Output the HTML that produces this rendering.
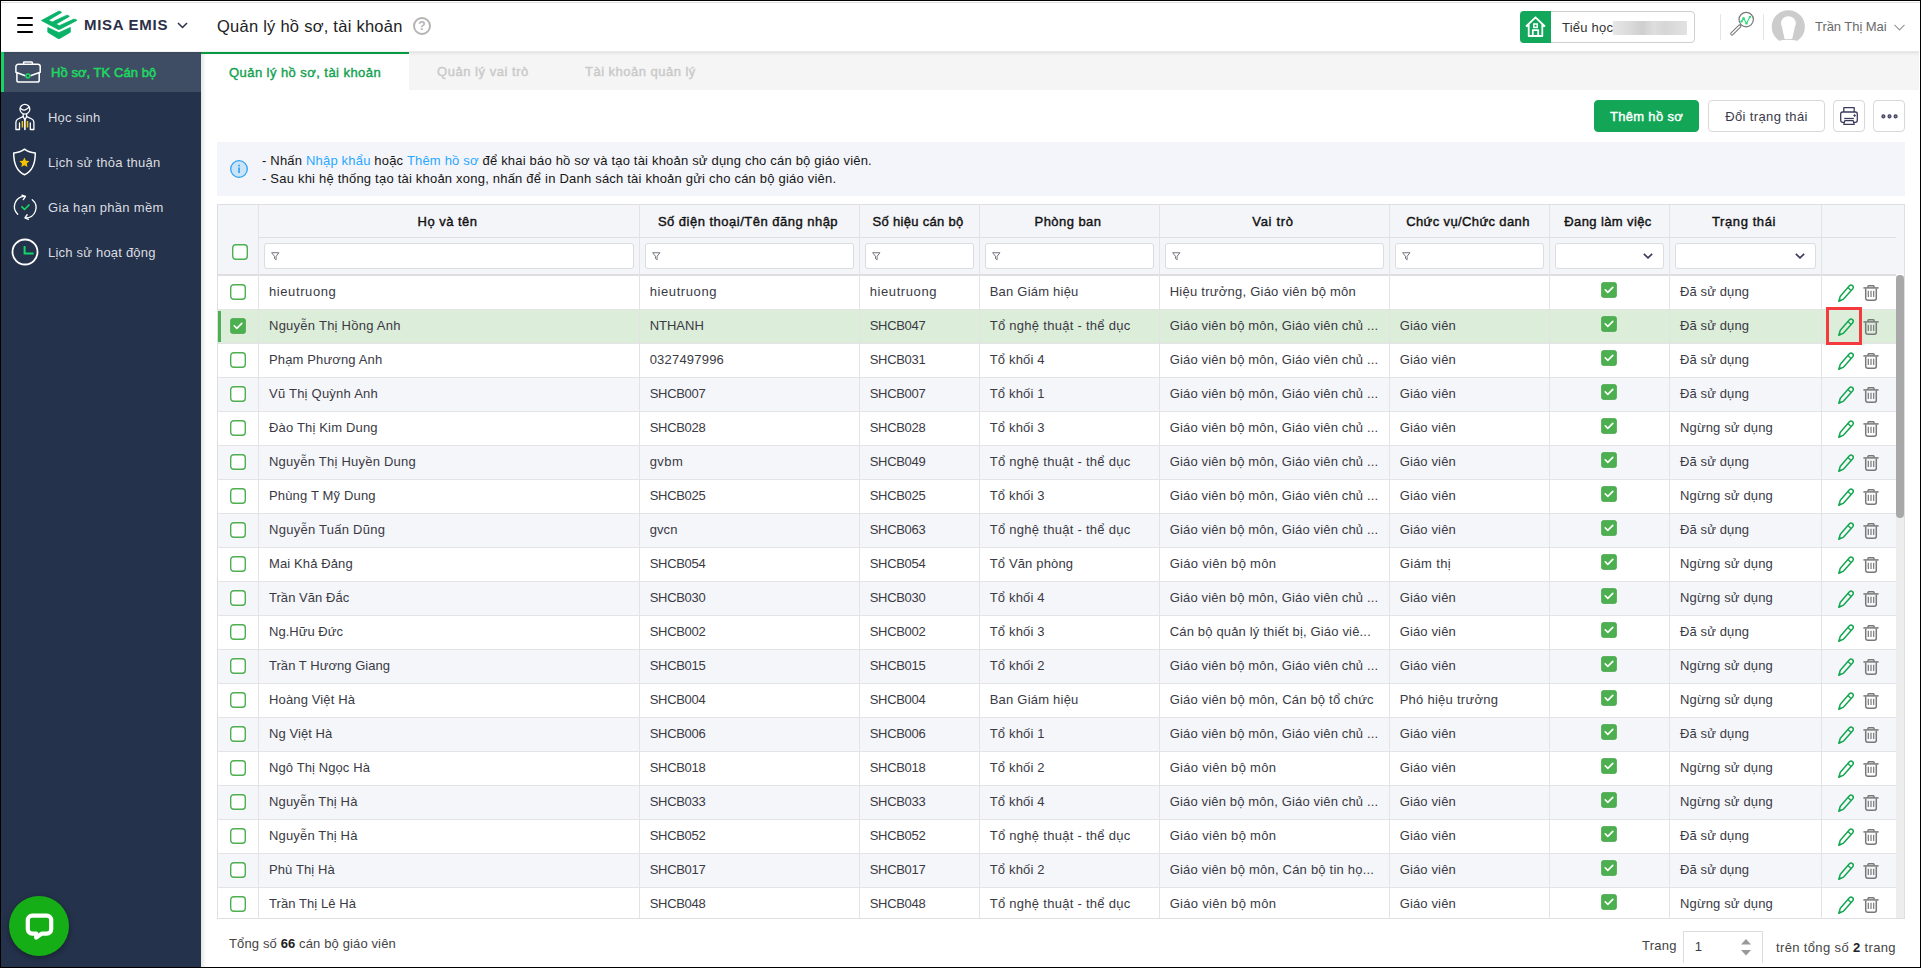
<!DOCTYPE html>
<html lang="vi"><head><meta charset="utf-8"><title>Quản lý hồ sơ, tài khoản</title>
<style>
*{box-sizing:border-box;margin:0;padding:0}
html,body{width:1921px;height:968px;overflow:hidden;background:#fff}
body{position:relative;font-family:"Liberation Sans",sans-serif;font-size:13px;color:#3a3a44}
.abs,.frame,.hdr,.side,.tabs,.main,.rows,.row,.foot{position:absolute}
svg{position:absolute;overflow:visible}
.frame{left:0;top:0;width:1921px;height:968px;border:1px solid #000;z-index:50;pointer-events:none}
/* header */
.hdr{left:1px;top:1px;width:1919px;height:50px;background:#fff;z-index:5}
.hshadow{position:absolute;left:1px;top:51px;width:1918px;height:5px;z-index:5;background:linear-gradient(rgba(0,0,0,.035),rgba(0,0,0,.075) 22%,rgba(0,0,0,.035) 50%,rgba(0,0,0,0))}
.hdr .topline{position:absolute;left:0;top:1px;width:100%;height:1px;background:#dfe0e3}
.hdr .burger{position:absolute;left:16px;top:16px;width:16px;height:16px}
.hdr .burger i{position:absolute;left:0;width:16px;height:2px;background:#000;border-radius:1px}
.hdr .brand{position:absolute;left:83px;top:15px;font-weight:700;font-size:15px;line-height:18px;color:#2b3047;white-space:nowrap}
.hdr .title{position:absolute;left:216px;top:13px;font-size:16.5px;line-height:24px;color:#222;white-space:nowrap}
.hdr .help{position:absolute;left:412px;top:16px;width:18px;height:18px;border:2px solid #b4b4b4;border-radius:50%;color:#b4b4b4;font-size:12px;font-weight:700;line-height:14px;text-align:center}
.school{position:absolute;left:1519px;top:10px;width:175px;height:32px;border:1px solid #cfcfcf;border-radius:4px;background:#fff}
.school .hm{position:absolute;left:-1px;top:-1px;width:31px;height:32px;background:#12a75a;border-radius:4px 0 0 4px}
.school .nm{position:absolute;left:41px;top:7px;font-size:13px;line-height:18px;color:#333;white-space:nowrap}
.school .blur{position:absolute;left:92px;top:9px;width:74px;height:14px;background:linear-gradient(90deg,#e6e6e6,#dcdcdc 20%,#cfcfcf 40%,#dedede 55%,#d6d6d6 70%,#e2e2e2);filter:blur(.6px)}
.hdr .vd{position:absolute;top:13px;width:1px;height:26px;background:#e4e4ec}
.hdr .user{position:absolute;left:1814px;top:17px;font-size:13px;line-height:18px;color:#6a6a6a;white-space:nowrap}
/* sidebar */
.side{left:1px;top:52px;width:200px;height:915px;background:#24324b;z-index:4}
.side .it{position:absolute;left:0;width:200px;height:40px;color:#dcdde0;white-space:nowrap}
.side .it span{position:absolute;left:47px;top:12px;line-height:18px;font-size:13px}
.side .it.act{background:#3f4d64;color:#1ed760;-webkit-text-stroke:.55px #1ed760}
.side .it.act:before{content:"";position:absolute;left:0;top:0;width:3px;height:40px;background:#12d665}
.side .it.act span{left:50px}
.chat{position:absolute;left:8px;top:844px;width:60px;height:60px;border-radius:50%;background:#16ae16;box-shadow:0 2px 6px rgba(0,0,0,.35)}
/* tabs */
.tabs{left:201px;top:51px;width:1718px;height:39px;background:#f5f5f5}
.tabs .t1{position:absolute;left:0;top:0;width:208px;height:39px;background:#fff}
.tabs .t1:before{content:"";position:absolute;left:0;top:1px;width:208px;height:2px;background:#079a43}
.tabline{position:absolute;left:201px;top:52px;width:208px;height:2px;background:#079a43;z-index:6}
.tabs b{position:absolute;top:12px;line-height:18px;font-size:13px;font-weight:400;white-space:nowrap;-webkit-text-stroke:.4px currentColor}
.tabs .t1 b{left:28px;top:13px;color:#12a150}
.tabs .t2{left:236px;color:#c9c9c9}
.tabs .t3{left:384px;color:#c9c9c9}
/* main */
.main{left:201px;top:90px;width:1719px;height:877px;background:#fff}
.sideshadow{position:absolute;left:201px;top:52px;width:5px;height:915px;background:linear-gradient(90deg,rgba(0,0,0,.10),rgba(0,0,0,0));z-index:3}
.btn{position:absolute;top:100px;height:32px;border-radius:4px;border:1px solid #d8d8dc;background:#fff;font-size:13px;line-height:32px;text-align:center;white-space:nowrap;color:#3a3a4a}
.btn.g{background:#12a656;border-color:#12a656;color:#fff;-webkit-text-stroke:.4px #fff}
.info{position:absolute;left:217px;top:142px;width:1688px;height:54px;background:#f4f5fa}
.info p{position:absolute;left:45px;font-size:13px;line-height:18px;color:#161616;white-space:nowrap}
.info a{color:#2aa7ff;text-decoration:none}
/* grid */
.grid{position:absolute;left:217px;top:204px;width:1688px;height:715px;border:1px solid #dfdfe3;background:#fff}
.ghead{position:absolute;left:218px;top:205px;width:1686px;height:69px;background:#f4f5f9}
.hline{position:absolute;left:258px;top:237px;width:1638px;height:1px;background:#e0e0e4}
.hbot{position:absolute;left:218px;top:274px;width:1678px;height:2px;background:#dedee2;z-index:2}
.vl{position:absolute;top:205px;width:1px;height:713px;background:#e3e3e6;z-index:2}
.th{position:absolute;margin-left:-1.5px;top:205px;height:32px;line-height:34px;text-align:center;color:#111;font-size:13px;white-space:nowrap;-webkit-text-stroke:.4px #111}
.fi{position:absolute;top:243px;height:26px;border:1px solid #dcdce0;border-radius:3px;background:#fff}
.rows{left:218px;top:276px;width:1678px;height:642px;overflow:hidden}
.row{left:0;width:1678px;height:34px;border-bottom:1px solid #e4e4e7;background:#fff}
.row.alt{background:#f5f6fa}
.row.sel{background:#dcedda}
.row.sel:before{content:"";position:absolute;left:0;top:1px;width:3px;height:31px;background:#4caf50}
.row .t{position:absolute;top:7px;line-height:18px;white-space:nowrap}
.c1{left:51px}.c2{left:431.7px}.c3{left:651.7px}.c4{left:771.7px}.c5{left:951.7px}.c6{left:1181.7px}.c8{left:1462px}
svg.ck{left:1383px;top:6px}
svg.cbo{left:12px;top:8px}
svg.pen{left:1620px;top:8px}
svg.trash{left:1645px;top:9px}
.hl{position:absolute;left:1826px;top:307px;width:36px;height:38px;border:3px solid #f43a3e;z-index:6}
.sb{position:absolute;left:1896px;top:275px;width:8px;height:643px;background:#ededed;z-index:3}
.sb i{position:absolute;left:0;top:0;width:8px;height:243px;background:#a8a8a8;border-radius:4px}
/* footer */
.foot{left:201px;top:919px;width:1719px;height:48px;background:#fff}
.foot .l{position:absolute;left:28px;top:16px;line-height:18px;white-space:nowrap;color:#444}
.foot b{color:#222}
.foot .pg{position:absolute;left:1441px;top:18px;line-height:18px;color:#444}
.foot .pin{position:absolute;left:1482px;top:12px;width:80px;height:32px;border:1px solid #dcdce0;border-bottom:none;background:#fff}
.foot .pin span{position:absolute;left:10.7px;top:6px;line-height:18px}
.foot .r{position:absolute;left:1575px;top:20px;line-height:18px;white-space:nowrap;color:#444}
</style></head>
<body>
<svg width="0" height="0" style="position:absolute"><defs>
<symbol id="i-pen" viewBox="0 0 16 18"><path d="M2.3 12.2L11.45 1.75A2.2 2.2 0 0 1 14.75 4.65L5.6 15.1 0.8 17.3z" fill="none" stroke="#14a651" stroke-width="1.5" stroke-linejoin="round"/><path d="M9.9 3.6l3.2 2.9" stroke="#14a651" stroke-width="1.3" fill="none"/><path d="M0.8 17.3l.7-2.6 1.9 1.6z" fill="#14a651"/></symbol>
<symbol id="i-trash" viewBox="0 0 16 16"><path d="M0.4 2.9h15.2" stroke="#787878" stroke-width="1.5" fill="none"/><path d="M4.6 2.5l.7-1.7h5.4l.7 1.7" stroke="#787878" stroke-width="1.4" fill="none" stroke-linejoin="round"/><path d="M2.7 3.5v9.7a2 2 0 0 0 2 2h6.6a2 2 0 0 0 2-2V3.5" fill="none" stroke="#787878" stroke-width="1.5"/><path d="M5.3 5.8v6.2M8 5.8v6.2M10.7 5.8v6.2" stroke="#787878" stroke-width="1.2" fill="none"/></symbol>
<symbol id="i-filter" viewBox="0 0 10 10"><path d="M0.7 0.8h8.1L5.7 4.8v3.8L3.9 7.3V4.8z" fill="none" stroke="#74747f" stroke-width="1.1" stroke-linejoin="round"/></symbol>
<symbol id="i-caret" viewBox="0 0 10 6"><path d="M0.8 0.8l4.2 4 4.2-4" fill="none" stroke="#3a3a5a" stroke-width="1.6"/></symbol>
<symbol id="i-ck" viewBox="0 0 16 16"><rect x=".3" y=".3" width="15.4" height="15.4" rx="3" fill="#4caf50" stroke="#43a548" stroke-width=".6"/><path d="M4.2 7.8l2.6 2.6 5-5" fill="none" stroke="#fff" stroke-width="1.6" stroke-linecap="round" stroke-linejoin="round"/></symbol>
<symbol id="i-cb" viewBox="0 0 16 16"><rect x=".7" y=".7" width="14.6" height="14.6" rx="3" fill="#fff" stroke="#4caf50" stroke-width="1.4"/></symbol>
</defs></svg>
<div class="frame"></div>
<div class="hshadow"></div>
<div class="tabline"></div>
<div class="hdr">
<div class="topline"></div>
<div class="burger"><i style="top:0"></i><i style="top:7px"></i><i style="top:14px"></i></div>
<svg style="left:39px;top:9px" width="38" height="30" viewBox="0 0 38 30"><g fill="#08b267" stroke="#08b267" stroke-width=".8" stroke-linejoin="round"><path d="M1.4 10.5L18.6 1.3Q20.6.7 21.6 2.4L8.4 10.3 12.2 12 26.4 5.4Q28.4 4.9 29.3 6.4L16.2 14 19.2 15.8 33.4 9.3Q35.8 8.8 36.9 10.4L19.8 19.3Q18.9 19.7 18 19.3z"/><path d="M7.8 17.5L18 22.3Q18.9 22.7 19.8 22.3L30.3 17.5V22.2L19.8 28.4Q18.9 28.9 18 28.4L7.8 22.2z"/></g></svg>
<div class="brand" style="letter-spacing:.7px">MISA EMIS</div>
<svg style="left:176px;top:21px" width="11" height="7" viewBox="0 0 11 7"><path d="M1 1l4.5 4.5L10 1" fill="none" stroke="#2b3047" stroke-width="1.5"/></svg>
<div class="title" style="letter-spacing:0.25px">Quản lý hồ sơ, tài khoản</div>
<div class="help">?</div>
<div class="school"><div class="hm"><svg style="left:5px;top:5px" width="21" height="21" viewBox="0 0 21 21"><path d="M1 10.5L10.5 1.3 20 10.5M3.7 8.5V20h13.6V8.5M7.8 20v-5.8h5.4V20" fill="none" stroke="#fff" stroke-width="1.8" stroke-linejoin="round"/><rect x="8.8" y="8" width="3.4" height="3.4" fill="none" stroke="#fff" stroke-width="1.5"/></svg></div><div class="nm" style="letter-spacing:0.22px">Tiểu học</div><div class="blur"></div></div>
<div class="vd" style="left:1719px"></div>
<svg style="left:1729px;top:11px" width="25" height="25" viewBox="0 0 25 25"><path d="M9.6 14.2L2 21.8" stroke="#777" stroke-width="3.6" stroke-linecap="round" fill="none"/><path d="M9.6 14.2L2 21.8" stroke="#fff" stroke-width="1.6" stroke-linecap="round" fill="none"/><path d="M11.3 12.5l-1.5 1.5" stroke="#777" stroke-width="1.2" fill="none"/><circle cx="16.2" cy="7.6" r="7.2" fill="#fff" stroke="#777" stroke-width="1.2"/><path d="M11.5 9.4l2.1-3.2 2.9 5.2 3.4-6.5" fill="none" stroke="#2bdc78" stroke-width="1.1" stroke-linejoin="round"/><g fill="#2bdc78"><circle cx="11.5" cy="9.4" r="1.2"/><circle cx="13.6" cy="6.2" r="1.2"/><circle cx="16.5" cy="11.4" r="1.2"/><circle cx="19.9" cy="4.9" r="1.2"/></g></svg>
<div class="vd" style="left:1762px"></div>
<svg style="left:1770px;top:9px;overflow:hidden" width="34" height="34" viewBox="0 0 34 34"><circle cx="17.3" cy="16.8" r="16.6" fill="#cccccc"/><circle cx="17.4" cy="13.6" r="7.4" fill="#fff"/><path d="M11 17.5L13.6 29h7.6L23.8 17.5z" fill="#fff"/><ellipse cx="17.4" cy="36.2" rx="16.5" ry="6.4" fill="#fff"/></svg>
<div class="user" style="letter-spacing:-0.05px">Trần Thị Mai</div>
<svg style="left:1893.3px;top:22.5px" width="11" height="7" viewBox="0 0 11 7"><path d="M0.5 0.8l5 5 5-5" fill="none" stroke="#999" stroke-width="1.2"/></svg>
</div>
<div class="side">
<div class="it act" style="top:0"><svg style="left:14px;top:9px" width="26" height="22" viewBox="0 0 26 22"><g fill="none" stroke="#fff" stroke-width="1.5" stroke-linejoin="round"><path d="M8.6 3.3V1.7a.8.8 0 0 1 .8-.8h7.2a.8.8 0 0 1 .8.8v1.6"/><path d="M3.2 3.3h19.7a2.3 2.3 0 0 1 2.3 2.3v5.6L15.4 14.7M10.3 14.7L.9 11.2V5.6a2.3 2.3 0 0 1 2.3-2.3"/><path d="M1.9 11.8v7.4a1.9 1.9 0 0 0 1.9 1.9h18.5a1.9 1.9 0 0 0 1.9-1.9v-7.4"/></g><circle cx="12.85" cy="14.9" r="1.9" fill="none" stroke="#1ed760" stroke-width="1.6"/></svg><span style="letter-spacing:0.05px">Hồ sơ, TK Cán bộ</span></div>
<div class="it" style="top:45px"><svg style="left:14px;top:6px" width="20" height="27" viewBox="0 0 20 27"><g fill="none" stroke="#fff" stroke-width="1.3" stroke-linejoin="round" stroke-linecap="round"><circle cx="9.9" cy="6.2" r="4.9"/><path d="M5.5 5.4q2.3 2.3 4.6 1.4t3.9-2.6"/><path d="M8.2 11.2v2.4L9.9 17l1.7-3.4v-2.4"/><path d="M8 13.6L3 16q-2 1-2.1 3.2v7.3h3.6v-6.5"/><path d="M11.8 13.6l5 2.4q2 1 2.1 3.2v7.3h-3.6v-6.5"/><path d="M9.9 17v9.5" stroke-width="1.6"/></g><path d="M7.4 18v6.5M12.5 18v6.5" stroke="#f2c200" stroke-width="1.5" fill="none"/></svg><span style="letter-spacing:0.23px">Học sinh</span></div>
<div class="it" style="top:90px"><svg style="left:11.2px;top:6px" width="25" height="28" viewBox="0 0 25 28"><path d="M12.5 1.2c2.8 2.3 6.5 3.6 10.8 3.8 0 9.5-2.3 18-10.8 21.8C4 23 1.7 14.5 1.7 5c4.3-.2 8-1.5 10.8-3.8z" fill="none" stroke="#fff" stroke-width="1.5" stroke-linejoin="round"/><path d="M12.4 9.5l1.5 3.2 3.5.4-2.6 2.4.7 3.5-3.1-1.8-3.1 1.8.7-3.5-2.6-2.4 3.5-.4z" fill="#f5c400"/></svg><span style="letter-spacing:0.27px">Lịch sử thỏa thuận</span></div>
<div class="it" style="top:135px"><svg style="left:12px;top:6.8px" width="24.4" height="26.3" viewBox="0 0 26 28"><g fill="none" stroke="#fff" stroke-width="1.4" stroke-linecap="round" stroke-linejoin="round"><path d="M5 21.5A11 11 0 0 1 12 2.5"/><path d="M9.5 1.2l3.8 1.3-2.3 3.5"/><path d="M20.5 6A11 11 0 0 1 13.5 25.5"/><path d="M16.5 27l-3.8-1.6 2.4-3.3"/></g><path d="M9 13.2l3.3 3.3 5.3-5.3" fill="none" stroke="#1ed760" stroke-width="1.7"/></svg><span style="letter-spacing:0.32px">Gia hạn phần mềm</span></div>
<div class="it" style="top:180px"><svg style="left:10.3px;top:6px" width="28" height="28" viewBox="0 0 28 28"><circle cx="14" cy="14" r="12.5" fill="none" stroke="#fff" stroke-width="1.8"/><path d="M13.6 8v7.5h9" fill="none" stroke="#12d665" stroke-width="2"/></svg><span style="letter-spacing:0.21px">Lịch sử hoạt động</span></div>
<div class="chat"><svg style="left:16px;top:17px" width="29" height="28" viewBox="0 0 29 28"><path d="M7.2 2.6h14.6a4.4 4.4 0 0 1 4.4 4.4v9.2a4.4 4.4 0 0 1-4.4 4.4h-4.8l-5.8 4v-4H7.2a4.4 4.4 0 0 1-4.4-4.4V7a4.4 4.4 0 0 1 4.4-4.4z" fill="none" stroke="#fff" stroke-width="4.2" stroke-linejoin="round"/></svg></div>
</div>
<div class="sideshadow"></div>
<div class="tabs"><div class="t1"><b style="letter-spacing:0.44px">Quản lý hồ sơ, tài khoản</b></div><b class="t2" style="letter-spacing:0.53px">Quản lý vai trò</b><b class="t3" style="letter-spacing:0.48px">Tài khoản quản lý</b></div>
<div class="btn g" style="left:1594px;width:105px;letter-spacing:0.32px">Thêm hồ sơ</div>
<div class="btn" style="left:1708px;width:117px;letter-spacing:0.38px">Đổi trạng thái</div>
<div class="btn" style="left:1833px;width:32px"><svg style="left:6px;top:6px" width="18" height="18" viewBox="0 0 18 18"><g fill="none" stroke="#3a3a5c" stroke-width="1.3" stroke-linejoin="round"><path d="M3.8 5V.7h10.4V5"/><rect x=".7" y="5" width="16.6" height="10.3" rx="2"/><path d="M4.2 11.5h9.6"/><path d="M3.8 17.3l1-3.6h8.4l1 3.6z" fill="#fff"/></g><rect x="13.6" y="7.5" width="2" height="2" fill="#3a3a5c" transform="rotate(45 14.6 8.5)"/></svg></div>
<div class="btn" style="left:1873px;width:32px"><svg style="left:7px;top:13px" width="17" height="5" viewBox="0 0 17 5"><g fill="#8a8a96" stroke="#3a3a5c" stroke-width="1.1"><circle cx="2.4" cy="2.4" r="1.5"/><circle cx="8.5" cy="2.4" r="1.5"/><circle cx="14.6" cy="2.4" r="1.5"/></g></svg></div>
<div class="info"><svg style="left:13px;top:18px" width="18" height="18" viewBox="0 0 18 18"><circle cx="9" cy="9" r="8.3" fill="#cbe3f6" stroke="#2ea3f2" stroke-width="1.3"/><rect x="8.2" y="7.5" width="1.7" height="5.5" fill="#2ea3f2"/><rect x="8.2" y="4.7" width="1.7" height="1.7" fill="#2ea3f2"/></svg><p style="top:10px;letter-spacing:0.19px">- Nhấn <a>Nhập khẩu</a> hoặc <a>Thêm hồ sơ</a> để khai báo hồ sơ và tạo tài khoản sử dụng cho cán bộ giáo viên.</p><p style="top:28px;letter-spacing:0.21px">- Sau khi hệ thống tạo tài khoản xong, nhấn để in Danh sách tài khoản gửi cho cán bộ giáo viên.</p></div>
<div class="grid"></div>
<div class="ghead"></div>
<div class="hline"></div>
<div class="th" style="left:259px;width:380px;letter-spacing:0.47px">Họ và tên</div>
<div class="th" style="left:640px;width:219px;letter-spacing:0.49px">Số điện thoại/Tên đăng nhập</div>
<div class="th" style="left:860px;width:119px;letter-spacing:0.31px">Số hiệu cán bộ</div>
<div class="th" style="left:980px;width:179px;letter-spacing:0.45px">Phòng ban</div>
<div class="th" style="left:1160px;width:229px;letter-spacing:0.68px">Vai trò</div>
<div class="th" style="left:1390px;width:159px;letter-spacing:0.38px">Chức vụ/Chức danh</div>
<div class="th" style="left:1550px;width:119px;letter-spacing:0.38px">Đang làm việc</div>
<div class="th" style="left:1670px;width:151px;letter-spacing:0.58px">Trạng thái</div>
<svg style="left:232px;top:244px" width="16" height="16"><use href="#i-cb"/></svg>
<div class="fi" style="left:264px;width:370px"><svg style="left:6px;top:8px" width="9" height="9"><use href="#i-filter"/></svg></div>
<div class="fi" style="left:645px;width:209px"><svg style="left:6px;top:8px" width="9" height="9"><use href="#i-filter"/></svg></div>
<div class="fi" style="left:865px;width:109px"><svg style="left:6px;top:8px" width="9" height="9"><use href="#i-filter"/></svg></div>
<div class="fi" style="left:985px;width:169px"><svg style="left:6px;top:8px" width="9" height="9"><use href="#i-filter"/></svg></div>
<div class="fi" style="left:1165px;width:219px"><svg style="left:6px;top:8px" width="9" height="9"><use href="#i-filter"/></svg></div>
<div class="fi" style="left:1395px;width:149px"><svg style="left:6px;top:8px" width="9" height="9"><use href="#i-filter"/></svg></div>
<div class="fi" style="left:1555px;width:109px"><svg style="right:10px;top:9px" width="10" height="6"><use href="#i-caret"/></svg></div>
<div class="fi" style="left:1675px;width:141px"><svg style="right:10px;top:9px" width="10" height="6"><use href="#i-caret"/></svg></div>
<div class="hbot"></div>
<div class="vl" style="left:258px"></div>
<div class="vl" style="left:639px"></div>
<div class="vl" style="left:859px"></div>
<div class="vl" style="left:979px"></div>
<div class="vl" style="left:1159px"></div>
<div class="vl" style="left:1389px"></div>
<div class="vl" style="left:1549px"></div>
<div class="vl" style="left:1669px"></div>
<div class="vl" style="left:1821px"></div>
<div class="sb"><i></i></div>
<div class="hl"></div>
<div class="rows">
<div class="row" style="top:0px"><svg class="cbo" width="16" height="16"><use href="#i-cb"/></svg><span class="t c1" style="letter-spacing:0.59px">hieutruong</span><span class="t c2" style="letter-spacing:0.59px">hieutruong</span><span class="t c3" style="letter-spacing:0.59px">hieutruong</span><span class="t c4" style="letter-spacing:0.22px">Ban Giám hiệu</span><span class="t c5" style="letter-spacing:0.25px">Hiệu trưởng, Giáo viên bộ môn</span><svg class="ck" width="16" height="16"><use href="#i-ck"/></svg><span class="t c8" style="letter-spacing:0.12px">Đã sử dụng</span><svg class="pen" width="16" height="18"><use href="#i-pen"/></svg><svg class="trash" width="16" height="16"><use href="#i-trash"/></svg></div>
<div class="row sel" style="top:34px"><svg class="cbo" width="16" height="16"><use href="#i-ck"/></svg><span class="t c1" style="letter-spacing:0.25px">Nguyễn Thị Hồng Anh</span><span class="t c2" style="letter-spacing:-0.01px">NTHANH</span><span class="t c3" style="letter-spacing:-0.31px">SHCB047</span><span class="t c4" style="letter-spacing:0.28px">Tổ nghệ thuật - thể dục</span><span class="t c5" style="letter-spacing:0.16px">Giáo viên bộ môn, Giáo viên chủ ...</span><span class="t c6" style="letter-spacing:0.14px">Giáo viên</span><svg class="ck" width="16" height="16"><use href="#i-ck"/></svg><span class="t c8" style="letter-spacing:0.12px">Đã sử dụng</span><svg class="pen" width="16" height="18"><use href="#i-pen"/></svg><svg class="trash" width="16" height="16"><use href="#i-trash"/></svg></div>
<div class="row" style="top:68px"><svg class="cbo" width="16" height="16"><use href="#i-cb"/></svg><span class="t c1" style="letter-spacing:0.14px">Phạm Phương Anh</span><span class="t c2" style="letter-spacing:0.2px">0327497996</span><span class="t c3" style="letter-spacing:-0.31px">SHCB031</span><span class="t c4" style="letter-spacing:0.18px">Tổ khối 4</span><span class="t c5" style="letter-spacing:0.16px">Giáo viên bộ môn, Giáo viên chủ ...</span><span class="t c6" style="letter-spacing:0.14px">Giáo viên</span><svg class="ck" width="16" height="16"><use href="#i-ck"/></svg><span class="t c8" style="letter-spacing:0.12px">Đã sử dụng</span><svg class="pen" width="16" height="18"><use href="#i-pen"/></svg><svg class="trash" width="16" height="16"><use href="#i-trash"/></svg></div>
<div class="row alt" style="top:102px"><svg class="cbo" width="16" height="16"><use href="#i-cb"/></svg><span class="t c1" style="letter-spacing:0.23px">Vũ Thị Quỳnh Anh</span><span class="t c2" style="letter-spacing:-0.31px">SHCB007</span><span class="t c3" style="letter-spacing:-0.31px">SHCB007</span><span class="t c4" style="letter-spacing:0.18px">Tổ khối 1</span><span class="t c5" style="letter-spacing:0.16px">Giáo viên bộ môn, Giáo viên chủ ...</span><span class="t c6" style="letter-spacing:0.14px">Giáo viên</span><svg class="ck" width="16" height="16"><use href="#i-ck"/></svg><span class="t c8" style="letter-spacing:0.12px">Đã sử dụng</span><svg class="pen" width="16" height="18"><use href="#i-pen"/></svg><svg class="trash" width="16" height="16"><use href="#i-trash"/></svg></div>
<div class="row" style="top:136px"><svg class="cbo" width="16" height="16"><use href="#i-cb"/></svg><span class="t c1" style="letter-spacing:0.17px">Đào Thị Kim Dung</span><span class="t c2" style="letter-spacing:-0.31px">SHCB028</span><span class="t c3" style="letter-spacing:-0.31px">SHCB028</span><span class="t c4" style="letter-spacing:0.18px">Tổ khối 3</span><span class="t c5" style="letter-spacing:0.16px">Giáo viên bộ môn, Giáo viên chủ ...</span><span class="t c6" style="letter-spacing:0.14px">Giáo viên</span><svg class="ck" width="16" height="16"><use href="#i-ck"/></svg><span class="t c8" style="letter-spacing:0.14px">Ngừng sử dụng</span><svg class="pen" width="16" height="18"><use href="#i-pen"/></svg><svg class="trash" width="16" height="16"><use href="#i-trash"/></svg></div>
<div class="row alt" style="top:170px"><svg class="cbo" width="16" height="16"><use href="#i-cb"/></svg><span class="t c1" style="letter-spacing:0.23px">Nguyễn Thị Huyền Dung</span><span class="t c2" style="letter-spacing:0.44px">gvbm</span><span class="t c3" style="letter-spacing:-0.31px">SHCB049</span><span class="t c4" style="letter-spacing:0.28px">Tổ nghệ thuật - thể dục</span><span class="t c5" style="letter-spacing:0.16px">Giáo viên bộ môn, Giáo viên chủ ...</span><span class="t c6" style="letter-spacing:0.14px">Giáo viên</span><svg class="ck" width="16" height="16"><use href="#i-ck"/></svg><span class="t c8" style="letter-spacing:0.12px">Đã sử dụng</span><svg class="pen" width="16" height="18"><use href="#i-pen"/></svg><svg class="trash" width="16" height="16"><use href="#i-trash"/></svg></div>
<div class="row" style="top:204px"><svg class="cbo" width="16" height="16"><use href="#i-cb"/></svg><span class="t c1" style="letter-spacing:0.16px">Phùng T Mỹ Dung</span><span class="t c2" style="letter-spacing:-0.31px">SHCB025</span><span class="t c3" style="letter-spacing:-0.31px">SHCB025</span><span class="t c4" style="letter-spacing:0.18px">Tổ khối 3</span><span class="t c5" style="letter-spacing:0.16px">Giáo viên bộ môn, Giáo viên chủ ...</span><span class="t c6" style="letter-spacing:0.14px">Giáo viên</span><svg class="ck" width="16" height="16"><use href="#i-ck"/></svg><span class="t c8" style="letter-spacing:0.14px">Ngừng sử dụng</span><svg class="pen" width="16" height="18"><use href="#i-pen"/></svg><svg class="trash" width="16" height="16"><use href="#i-trash"/></svg></div>
<div class="row alt" style="top:238px"><svg class="cbo" width="16" height="16"><use href="#i-cb"/></svg><span class="t c1" style="letter-spacing:0.26px">Nguyễn Tuấn Dũng</span><span class="t c2" style="letter-spacing:0.07px">gvcn</span><span class="t c3" style="letter-spacing:-0.31px">SHCB063</span><span class="t c4" style="letter-spacing:0.28px">Tổ nghệ thuật - thể dục</span><span class="t c5" style="letter-spacing:0.16px">Giáo viên bộ môn, Giáo viên chủ ...</span><span class="t c6" style="letter-spacing:0.14px">Giáo viên</span><svg class="ck" width="16" height="16"><use href="#i-ck"/></svg><span class="t c8" style="letter-spacing:0.12px">Đã sử dụng</span><svg class="pen" width="16" height="18"><use href="#i-pen"/></svg><svg class="trash" width="16" height="16"><use href="#i-trash"/></svg></div>
<div class="row" style="top:272px"><svg class="cbo" width="16" height="16"><use href="#i-cb"/></svg><span class="t c1" style="letter-spacing:0.12px">Mai Khả Đảng</span><span class="t c2" style="letter-spacing:-0.31px">SHCB054</span><span class="t c3" style="letter-spacing:-0.31px">SHCB054</span><span class="t c4" style="letter-spacing:0.15px">Tổ Văn phòng</span><span class="t c5" style="letter-spacing:0.29px">Giáo viên bộ môn</span><span class="t c6" style="letter-spacing:0.36px">Giám thị</span><svg class="ck" width="16" height="16"><use href="#i-ck"/></svg><span class="t c8" style="letter-spacing:0.14px">Ngừng sử dụng</span><svg class="pen" width="16" height="18"><use href="#i-pen"/></svg><svg class="trash" width="16" height="16"><use href="#i-trash"/></svg></div>
<div class="row alt" style="top:306px"><svg class="cbo" width="16" height="16"><use href="#i-cb"/></svg><span class="t c1" style="letter-spacing:0.04px">Trần Văn Đắc</span><span class="t c2" style="letter-spacing:-0.31px">SHCB030</span><span class="t c3" style="letter-spacing:-0.31px">SHCB030</span><span class="t c4" style="letter-spacing:0.18px">Tổ khối 4</span><span class="t c5" style="letter-spacing:0.16px">Giáo viên bộ môn, Giáo viên chủ ...</span><span class="t c6" style="letter-spacing:0.14px">Giáo viên</span><svg class="ck" width="16" height="16"><use href="#i-ck"/></svg><span class="t c8" style="letter-spacing:0.14px">Ngừng sử dụng</span><svg class="pen" width="16" height="18"><use href="#i-pen"/></svg><svg class="trash" width="16" height="16"><use href="#i-trash"/></svg></div>
<div class="row" style="top:340px"><svg class="cbo" width="16" height="16"><use href="#i-cb"/></svg><span class="t c1" style="letter-spacing:0.03px">Ng.Hữu Đức</span><span class="t c2" style="letter-spacing:-0.31px">SHCB002</span><span class="t c3" style="letter-spacing:-0.31px">SHCB002</span><span class="t c4" style="letter-spacing:0.18px">Tổ khối 3</span><span class="t c5" style="letter-spacing:0.17px">Cán bộ quản lý thiết bị, Giáo viê...</span><span class="t c6" style="letter-spacing:0.14px">Giáo viên</span><svg class="ck" width="16" height="16"><use href="#i-ck"/></svg><span class="t c8" style="letter-spacing:0.12px">Đã sử dụng</span><svg class="pen" width="16" height="18"><use href="#i-pen"/></svg><svg class="trash" width="16" height="16"><use href="#i-trash"/></svg></div>
<div class="row alt" style="top:374px"><svg class="cbo" width="16" height="16"><use href="#i-cb"/></svg><span class="t c1" style="letter-spacing:0.04px">Trần T Hương Giang</span><span class="t c2" style="letter-spacing:-0.31px">SHCB015</span><span class="t c3" style="letter-spacing:-0.31px">SHCB015</span><span class="t c4" style="letter-spacing:0.18px">Tổ khối 2</span><span class="t c5" style="letter-spacing:0.16px">Giáo viên bộ môn, Giáo viên chủ ...</span><span class="t c6" style="letter-spacing:0.14px">Giáo viên</span><svg class="ck" width="16" height="16"><use href="#i-ck"/></svg><span class="t c8" style="letter-spacing:0.14px">Ngừng sử dụng</span><svg class="pen" width="16" height="18"><use href="#i-pen"/></svg><svg class="trash" width="16" height="16"><use href="#i-trash"/></svg></div>
<div class="row" style="top:408px"><svg class="cbo" width="16" height="16"><use href="#i-cb"/></svg><span class="t c1" style="letter-spacing:0.14px">Hoàng Việt Hà</span><span class="t c2" style="letter-spacing:-0.31px">SHCB004</span><span class="t c3" style="letter-spacing:-0.31px">SHCB004</span><span class="t c4" style="letter-spacing:0.22px">Ban Giám hiệu</span><span class="t c5" style="letter-spacing:0.19px">Giáo viên bộ môn, Cán bộ tổ chức</span><span class="t c6" style="letter-spacing:0.26px">Phó hiệu trưởng</span><svg class="ck" width="16" height="16"><use href="#i-ck"/></svg><span class="t c8" style="letter-spacing:0.14px">Ngừng sử dụng</span><svg class="pen" width="16" height="18"><use href="#i-pen"/></svg><svg class="trash" width="16" height="16"><use href="#i-trash"/></svg></div>
<div class="row alt" style="top:442px"><svg class="cbo" width="16" height="16"><use href="#i-cb"/></svg><span class="t c1" style="letter-spacing:0.07px">Ng Việt Hà</span><span class="t c2" style="letter-spacing:-0.31px">SHCB006</span><span class="t c3" style="letter-spacing:-0.31px">SHCB006</span><span class="t c4" style="letter-spacing:0.18px">Tổ khối 1</span><span class="t c5" style="letter-spacing:0.16px">Giáo viên bộ môn, Giáo viên chủ ...</span><span class="t c6" style="letter-spacing:0.14px">Giáo viên</span><svg class="ck" width="16" height="16"><use href="#i-ck"/></svg><span class="t c8" style="letter-spacing:0.12px">Đã sử dụng</span><svg class="pen" width="16" height="18"><use href="#i-pen"/></svg><svg class="trash" width="16" height="16"><use href="#i-trash"/></svg></div>
<div class="row" style="top:476px"><svg class="cbo" width="16" height="16"><use href="#i-cb"/></svg><span class="t c1" style="letter-spacing:0.1px">Ngô Thị Ngọc Hà</span><span class="t c2" style="letter-spacing:-0.31px">SHCB018</span><span class="t c3" style="letter-spacing:-0.31px">SHCB018</span><span class="t c4" style="letter-spacing:0.18px">Tổ khối 2</span><span class="t c5" style="letter-spacing:0.29px">Giáo viên bộ môn</span><span class="t c6" style="letter-spacing:0.14px">Giáo viên</span><svg class="ck" width="16" height="16"><use href="#i-ck"/></svg><span class="t c8" style="letter-spacing:0.14px">Ngừng sử dụng</span><svg class="pen" width="16" height="18"><use href="#i-pen"/></svg><svg class="trash" width="16" height="16"><use href="#i-trash"/></svg></div>
<div class="row alt" style="top:510px"><svg class="cbo" width="16" height="16"><use href="#i-cb"/></svg><span class="t c1" style="letter-spacing:0.16px">Nguyễn Thị Hà</span><span class="t c2" style="letter-spacing:-0.31px">SHCB033</span><span class="t c3" style="letter-spacing:-0.31px">SHCB033</span><span class="t c4" style="letter-spacing:0.18px">Tổ khối 4</span><span class="t c5" style="letter-spacing:0.16px">Giáo viên bộ môn, Giáo viên chủ ...</span><span class="t c6" style="letter-spacing:0.14px">Giáo viên</span><svg class="ck" width="16" height="16"><use href="#i-ck"/></svg><span class="t c8" style="letter-spacing:0.14px">Ngừng sử dụng</span><svg class="pen" width="16" height="18"><use href="#i-pen"/></svg><svg class="trash" width="16" height="16"><use href="#i-trash"/></svg></div>
<div class="row" style="top:544px"><svg class="cbo" width="16" height="16"><use href="#i-cb"/></svg><span class="t c1" style="letter-spacing:0.16px">Nguyễn Thị Hà</span><span class="t c2" style="letter-spacing:-0.31px">SHCB052</span><span class="t c3" style="letter-spacing:-0.31px">SHCB052</span><span class="t c4" style="letter-spacing:0.28px">Tổ nghệ thuật - thể dục</span><span class="t c5" style="letter-spacing:0.29px">Giáo viên bộ môn</span><span class="t c6" style="letter-spacing:0.14px">Giáo viên</span><svg class="ck" width="16" height="16"><use href="#i-ck"/></svg><span class="t c8" style="letter-spacing:0.12px">Đã sử dụng</span><svg class="pen" width="16" height="18"><use href="#i-pen"/></svg><svg class="trash" width="16" height="16"><use href="#i-trash"/></svg></div>
<div class="row alt" style="top:578px"><svg class="cbo" width="16" height="16"><use href="#i-cb"/></svg><span class="t c1" style="letter-spacing:0.1px">Phù Thị Hà</span><span class="t c2" style="letter-spacing:-0.31px">SHCB017</span><span class="t c3" style="letter-spacing:-0.31px">SHCB017</span><span class="t c4" style="letter-spacing:0.18px">Tổ khối 2</span><span class="t c5" style="letter-spacing:0.21px">Giáo viên bộ môn, Cán bộ tin họ...</span><span class="t c6" style="letter-spacing:0.14px">Giáo viên</span><svg class="ck" width="16" height="16"><use href="#i-ck"/></svg><span class="t c8" style="letter-spacing:0.12px">Đã sử dụng</span><svg class="pen" width="16" height="18"><use href="#i-pen"/></svg><svg class="trash" width="16" height="16"><use href="#i-trash"/></svg></div>
<div class="row" style="top:612px"><svg class="cbo" width="16" height="16"><use href="#i-cb"/></svg><span class="t c1" style="letter-spacing:0.08px">Trần Thị Lê Hà</span><span class="t c2" style="letter-spacing:-0.31px">SHCB048</span><span class="t c3" style="letter-spacing:-0.31px">SHCB048</span><span class="t c4" style="letter-spacing:0.28px">Tổ nghệ thuật - thể dục</span><span class="t c5" style="letter-spacing:0.29px">Giáo viên bộ môn</span><span class="t c6" style="letter-spacing:0.14px">Giáo viên</span><svg class="ck" width="16" height="16"><use href="#i-ck"/></svg><span class="t c8" style="letter-spacing:0.14px">Ngừng sử dụng</span><svg class="pen" width="16" height="18"><use href="#i-pen"/></svg><svg class="trash" width="16" height="16"><use href="#i-trash"/></svg></div>
</div>
<div class="foot"><div class="l" style="letter-spacing:0.13px">Tổng số <b>66</b> cán bộ giáo viên</div><div class="pg" style="letter-spacing:0.25px">Trang</div><div class="pin"><span>1</span><svg style="left:57px;top:7px" width="10" height="17" viewBox="0 0 10 17"><path d="M0 5.5L5 0l5 5.5zM0 11l5 5.5L10 11z" fill="#999"/></svg></div><div class="r" style="letter-spacing:0.36px">trên tổng số <b>2</b> trang</div></div>
</body></html>
